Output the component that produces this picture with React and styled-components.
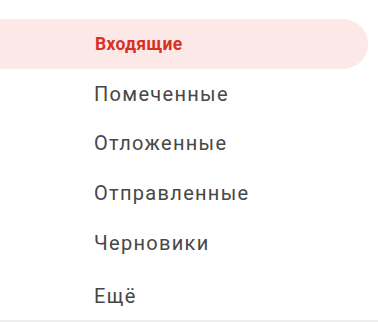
import React from "react";
import styled, { createGlobalStyle } from "styled-components";

const Global = createGlobalStyle`
  html, body { margin: 0; padding: 0; background: #fff; }
  body { font-family: Roboto, "Noto Sans", Arial, sans-serif; }
`;

const Page = styled.div`
  width: 378px;
  height: 322px;
  box-sizing: border-box;
  display: flex;
  flex-direction: column;
  border-bottom: 2px solid #eeeeee;
  overflow: hidden;
`;

const Nav = styled.nav`
  display: flex;
  flex-direction: column;
  padding: 19px 10px 0 0;
`;

const Item = styled.a`
  display: flex;
  align-items: center;
  height: 49.75px;
  padding-left: ${(p) => (p.$active ? "95px" : "94px")};
  margin-top: ${(p) => (p.$more ? "3px" : "0")};
  border-radius: 0 25px 25px 0;
  background: ${(p) => (p.$active ? "#fce8e6" : "transparent")};
  color: ${(p) => (p.$active ? "#d93025" : "#474747")};
  font-size: ${(p) => (p.$active ? "17.5px" : "20px")};
  font-weight: ${(p) => (p.$active ? 700 : 400)};
  letter-spacing: ${(p) => (p.$active ? "0.3px" : "1.3px")};
  text-decoration: none;
  cursor: pointer;
`;

const items = ["Входящие", "Помеченные", "Отложенные", "Отправленные", "Черновики"];

export default function App() {
  return (
    <>
      <Global />
      <Page>
        <Nav>
          {items.map((t, i) => (
            <Item key={t} $active={i === 0}>
              {t}
            </Item>
          ))}
          <Item $more>Ещё</Item>
        </Nav>
      </Page>
    </>
  );
}
